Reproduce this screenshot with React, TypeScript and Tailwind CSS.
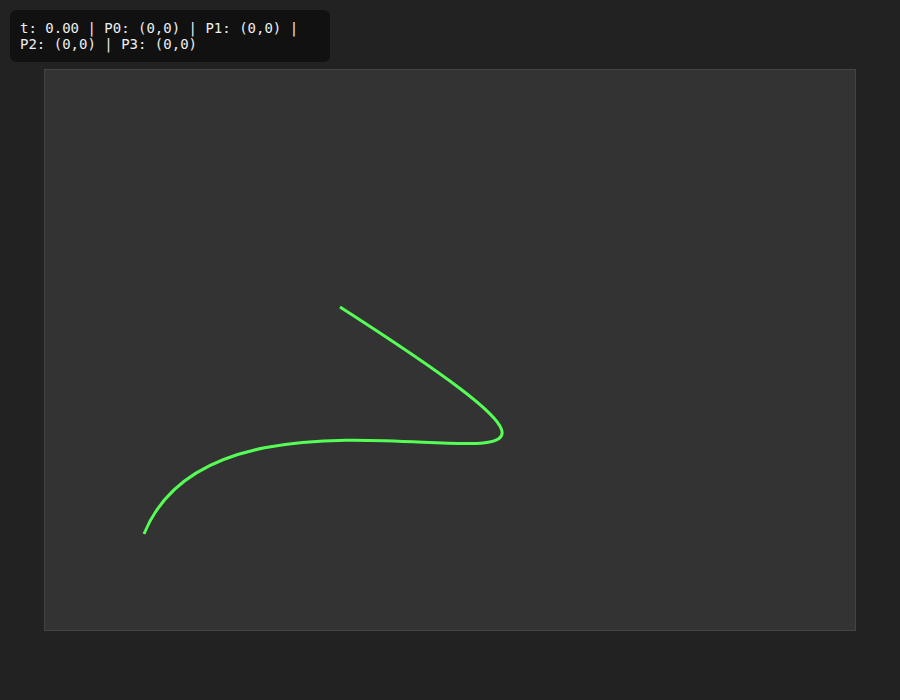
import React from 'react';

// Bezier control points in canvas space
const P0 = { x: 295, y: 237 };
const P1 = { x: 720, y: 510 };
const P2 = { x: 185, y: 250 };
const P3 = { x: 99, y: 464 };

export default function App() {
  const d = `M ${P0.x} ${P0.y} C ${P1.x} ${P1.y}, ${P2.x} ${P2.y}, ${P3.x} ${P3.y}`;

  return (
    <div className="relative w-[900px] h-[700px] bg-[#222222] flex items-center justify-center overflow-hidden">
      {/* Info overlay */}
      <div
        className="absolute top-[10px] left-[10px] max-w-[320px] px-[10px] py-[10px] rounded-md bg-[#111111] text-[#eeeeee] text-[14px] leading-[16px]"
        style={{ fontFamily: '"DejaVu Sans Mono", monospace' }}
      >
        t: 0.00 | P0: (0,0) | P1: (0,0) | P2: (0,0) | P3: (0,0)
      </div>

      {/* Canvas */}
      <div className="border border-[#444444] bg-[#333333]">
        <svg width={810} height={560} className="block">
          <path d={d} fill="none" stroke="#55ff55" strokeWidth={3} strokeLinecap="butt" />
        </svg>
      </div>
    </div>
  );
}
